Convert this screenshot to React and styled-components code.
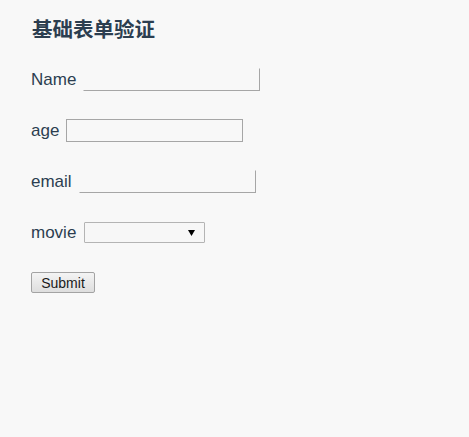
import React, { useState } from 'react';
import styled, { createGlobalStyle } from 'styled-components';

const GlobalStyle = createGlobalStyle`
  html, body {
    margin: 0;
    padding: 0;
    background: #f8f8f8;
  }
  body {
    min-height: 437px;
    font-family: "Liberation Sans", Arial, "Noto Sans CJK SC", sans-serif;
    color: #2c3e50;
  }
`;

const Page = styled.div`
  padding: 15px 31px;
`;

const Title = styled.h2`
  margin: 0 0 23px 1px;
  font-size: 20.5px;
  line-height: 30px;
  font-weight: bold;
  font-family: "Liberation Sans", "Noto Sans CJK SC", sans-serif;
`;

const Form = styled.form`
  display: flex;
  flex-direction: column;
  gap: 28px;
`;

const Row = styled.label`
  display: flex;
  align-items: center;
  height: 23px;
  font-size: 17px;
  gap: 7px;
`;

const TextInput = styled.input`
  box-sizing: border-box;
  width: 177px;
  height: 23px;
  margin: 0;
  padding: 1px 3px;
  background: transparent;
  border: 1px solid;
  border-color: ${p => (p.boxed ? '#a6a6a6' : '#f8f8f8 #a6a6a6 #a6a6a6 #f8f8f8')};
  font-size: 13px;
  outline: none;
`;

const Select = styled.select`
  box-sizing: border-box;
  width: 121px;
  height: 21px;
  margin: 0 0 0 1px;
  appearance: none;
  border: 1px solid #b4b4b4;
  border-radius: 1px;
  background-color: #f7f7f7;
  background-image: url("data:image/svg+xml;utf8,<svg xmlns='http://www.w3.org/2000/svg' width='7' height='6'><path d='M0 0h7L3.5 6z' fill='black'/></svg>");
  background-repeat: no-repeat;
  background-position: right 9px center;
  font-size: 13px;
`;

const Button = styled.button`
  box-sizing: border-box;
  align-self: flex-start;
  width: 64px;
  height: 21px;
  margin: 0;
  padding: 0;
  border: 1px solid #a3a3a3;
  border-radius: 2px;
  background: linear-gradient(#f4f4f4, #dedede);
  color: #1a1a1a;
  font-family: "Liberation Sans", Arial, sans-serif;
  font-size: 14px;
  cursor: pointer;
`;

export default function App() {
  const [form, setForm] = useState({ name: '', age: '', email: '', movie: '' });
  const update = key => e => setForm({ ...form, [key]: e.target.value });

  return (
    <>
      <GlobalStyle />
      <Page>
        <Title>基础表单验证</Title>
        <Form onSubmit={e => e.preventDefault()}>
          <Row>
            Name <TextInput value={form.name} onChange={update('name')} />
          </Row>
          <Row>
            age <TextInput boxed value={form.age} onChange={update('age')} />
          </Row>
          <Row>
            email <TextInput value={form.email} onChange={update('email')} />
          </Row>
          <Row>
            movie
            <Select value={form.movie} onChange={update('movie')}>
              <option value=""></option>
              <option value="a">A</option>
              <option value="b">B</option>
            </Select>
          </Row>
          <Button type="submit">Submit</Button>
        </Form>
      </Page>
    </>
  );
}
